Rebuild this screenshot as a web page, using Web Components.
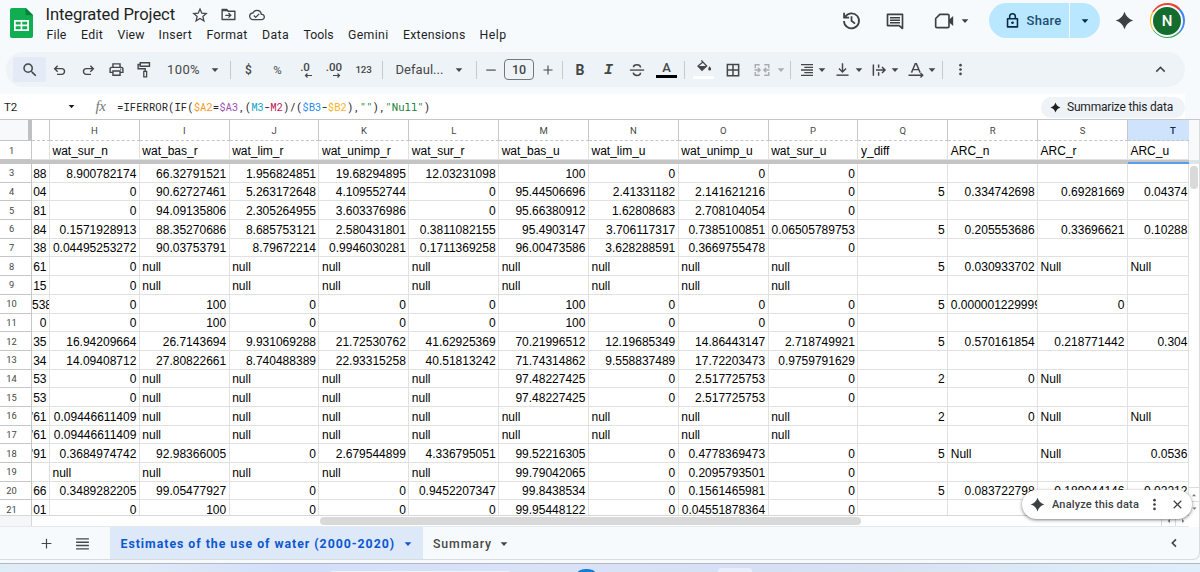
<!DOCTYPE html>
<html lang="en">
<head>
<meta charset="utf-8">
<title>Integrated Project</title>
<style>
	html, body { margin: 0; height: 100%; overflow: hidden; }
	body { font-family: Roboto, "Liberation Sans", sans-serif; background: #f6fafd; color: #1f1f1f; }
</style>
</head>
<body>
<sheet-app></sheet-app>

<script>
const ICONS = {
	star: '<path d="M12 3l2.7 6.2 6.7.6-5.1 4.4 1.6 6.6-5.900-3.500-5.900 3.500 1.600-6.600-5.100-4.400 6.700-.6z" fill="none" stroke="currentColor" stroke-width="1.900"/>',
	move: '<path d="M3 5h6.500l2 2.500H21V19H3z" fill="none" stroke="currentColor" stroke-width="2" stroke-linejoin="round"/><path d="M3 4.500h6.500l2.500 3H3z"/><path d="M7.500 13.200h7.500M12 10l3.200 3.200L12 16.400" fill="none" stroke="currentColor" stroke-width="1.900"/>',
	cloud: '<path d="M19.35 10.04A7.49 7.49 0 0 0 12 4C9.11 4 6.6 5.64 5.35 8.04A5.994 5.994 0 0 0 0 14c0 3.31 2.69 6 6 6h13c2.76 0 5-2.24 5-5 0-2.64-2.05-4.78-4.65-4.96zM19 18H6c-2.21 0-4-1.79-4-4 0-2.05 1.53-3.76 3.56-3.97l1.07-.11.5-.95A5.469 5.469 0 0 1 12 6c2.62 0 4.88 1.86 5.39 4.43l.3 1.5 1.53.11A2.98 2.98 0 0 1 22 15c0 1.65-1.35 3-3 3zm-9-3.82-2.09-2.09L6.5 13.5 10 17l6.01-6.01-1.41-1.41z"/>',
	history: '<path d="M4.600 8A8.600 8.600 0 1 1 3.400 12.500M3.500 3v5.800h5.800M12 7v5.300l4 3.200" fill="none" stroke="currentColor" stroke-width="2"/>',
	comment: '<path d="M3 4h18v17l-4-3.5H3z" fill="none" stroke="currentColor" stroke-width="2" stroke-linejoin="round"/><path d="M6 8h12M6 11h12M6 14h12" stroke="currentColor" stroke-width="1.7"/>',
	video: '<path d="M7 4h9.5q1.5 0 1.5 1.5v13q0 1.5-1.5 1.5H3.500q-1.500 0-1.500-1.500V9z" fill="none" stroke="currentColor" stroke-width="2"/><path d="M18 10.500l5-4.500v12l-5-4.500z"/>',
	lock: '<path d="M5 9.500h14V21H5z" fill="none" stroke="currentColor" stroke-width="2.200" stroke-linejoin="round"/><path d="M8 9V6.500a4 4 0 0 1 8 0V9" fill="none" stroke="currentColor" stroke-width="2.200"/><circle cx="12" cy="15.200" r="1.900"/>',
	spark: '<path d="M12 1q2.600 8.400 11 11-8.400 2.600-11 11-2.600-8.400-11-11 8.400-2.600 11-11z"/>',
	search: '<path d="M15.500 14h-.79l-.28-.27A6.471 6.471 0 0 0 16 9.500 6.500 6.500 0 1 0 9.500 16c1.610 0 3.090-.59 4.230-1.570l.27.28v.79l5 4.990L20.490 19l-4.990-5zm-6 0C7.010 14 5 11.990 5 9.500S7.010 5 9.500 5 14 7.010 14 9.500 11.990 14 9.500 14z"/>',
	undo: '<path d="M4 10h10.500a4.300 4.300 0 0 1 0 8.600H7.500M8.500 5.500L4 10l4.500 4.500" fill="none" stroke="currentColor" stroke-width="2.100"/>',
	redo: '<path d="M20 10H9.500a4.300 4.300 0 0 0 0 8.600h7M15.500 5.500L20 10l-4.500 4.500" fill="none" stroke="currentColor" stroke-width="2.100"/>',
	print: '<path d="M19 8h-1V3H6v5H5c-1.660 0-3 1.340-3 3v6h4v4h12v-4h4v-6c0-1.660-1.340-3-3-3zM8 5h8v3H8V5zm8 12v2H8v-4h8v2zm2-2v-2H6v2H4v-4c0-.55.45-1 1-1h14c.55 0 1 .45 1 1v4h-2z"/><circle cx="18" cy="11.500" r="1"/>',
	paint: '<path d="M6 2.500h13v5H6zM6 5H3v6h10v4" fill="none" stroke="currentColor" stroke-width="2"/><path d="M11 14.500h4v8h-4z" fill="none" stroke="currentColor" stroke-width="1.800"/>',
	minus: '<path d="M2.500 11h19v2.300h-19z"/>',
	plus: '<path d="M10.900 3h2.200v7.900H21v2.200h-7.900V21h-2.200v-7.900H3v-2.200h7.900z"/>',
	strike: '<path d="M2.500 11.200h19v1.800h-19z"/><path d="M16.800 8.700C16.500 6.200 14.700 5 12 5S7.300 6.400 7.300 8.400M7 15.500c.3 2.500 2.200 3.700 5 3.700s4.700-1.400 4.700-3.500" fill="none" stroke="currentColor" stroke-width="2"/>',
	fill: '<path d="M8 2l8 8.500-7 6.500-6-6.500L10 5" fill="none" stroke="currentColor" stroke-width="2"/><path d="M3.500 10.500h12l-6.500 6z"/><path d="M20.500 11s-2.200 2.600-2.200 4.200a2.200 2.200 0 0 0 4.400 0c0-1.600-2.200-4.200-2.200-4.200z"/>',
	borders: '<path d="M4.500 4.500h15v15h-15zM12 4.500v15M4.500 12h15" fill="none" stroke="currentColor" stroke-width="2"/>',
	merge: '<path d="M9 5H3v4.500M9 19H3v-4.500M15 5h6v4.500M15 19h6v-4.500M2 12h7M22 12h-7M6.500 9l3 3-3 3M17.500 9l-3 3 3 3" fill="none" stroke="currentColor" stroke-width="1.900"/>',
	right: '<path d="M3 3h18v2H3zM8 7h13v2H8zM3 11h18v2H3zM8 15h13v2H8zM3 19h18v2H3z"/>',
	bottom: '<path d="M12 3v12M7 10.500l5 5 5-5" fill="none" stroke="currentColor" stroke-width="2"/><path d="M3.500 19h17v2h-17z"/>',
	wrap: '<path d="M4.500 4.500v15M11.500 4.500v4.500M11.500 15v4.500M8 12h12M16 8l4 4-4 4" fill="none" stroke="currentColor" stroke-width="2"/>',
	rotate: '<path d="M6 15.500L11 3.500h1.500l5 12M8 11.500h7.500" fill="none" stroke="currentColor" stroke-width="1.900"/><path d="M2 19h18M18 16l3 3-3 3" fill="none" stroke="currentColor" stroke-width="1.900"/>',
	more: '<circle cx="12" cy="5" r="2.100"/><circle cx="12" cy="12" r="2.100"/><circle cx="12" cy="19" r="2.100"/>',
	up: '<path d="M6 15L12 9l6 6" fill="none" stroke="currentColor" stroke-width="2"/>',
	left: '<path d="M15 6.500L9.500 12l5.500 5.500" fill="none" stroke="currentColor" stroke-width="2.500"/>',
	menu: '<path d="M3 4.500h18v2H3zM3 9.200h18v2H3zM3 13.900h18v2H3zM3 18.600h18v2H3z"/>',
	close: '<path d="M5 5l14 14M19 5L5 19" fill="none" stroke="currentColor" stroke-width="2.200"/>',
	caret: '<path d="M2 7h20L12 18z"/>',
	triup: '<path d="M4 17h16L12 8z"/>',
	triright: '<path d="M8 4v16l9-8z"/>',
	trileft: '<path d="M16 4v16l-9-8z"/>'
}

class SheetIcon extends HTMLElement {
	connectedCallback() {
		const size = this.getAttribute('size') || 18
		this.attachShadow({ mode: 'open' }).innerHTML = `
			<style>
				:host { display: inline-flex; flex: none; }
				svg { display: block; fill: currentColor; }
			</style>
			<svg width="${size}" height="${size}" viewBox="0 0 24 24">${ICONS[this.getAttribute('name')]}</svg>
		`
	}
}
customElements.define('sheet-icon', SheetIcon)

// a label that tracks its letters out (or in) to fill the given width
class SheetLabel extends HTMLElement {
	connectedCallback() {
		this.attachShadow({ mode: 'open' }).innerHTML = `
			<style>
				:host { display: block; flex: none; white-space: nowrap; }
				span { display: inline-block; }
			</style>
			<span>${this.getAttribute('text')}</span>
		`
		const width = Number(this.getAttribute('width'))
		const span = this.shadowRoot.querySelector('span')
		this.style.width = width + 'px'
		const gap = (width - span.getBoundingClientRect().width) / span.textContent.length
		span.style.letterSpacing = gap.toFixed(3) + 'px'
	}
}
customElements.define('sheet-label', SheetLabel)

class SheetHeader extends HTMLElement {
	connectedCallback() {
		// [text, gap before, width]
		const menu = [['File', 0, 20], ['Edit', 14.500, 22], ['View', 14.500, 27], ['Insert', 14, 33.500], ['Format', 14.500, 41],
			['Data', 14.500, 27], ['Tools', 14.500, 30], ['Gemini', 14.500, 40.500], ['Extensions', 14.500, 62.500], ['Help', 14, 27]]
		this.attachShadow({ mode: 'open' }).innerHTML = `
			<style>
				:host { display: flex; height: 52px; box-sizing: border-box; padding-left: 10px; }
				.logo { margin-top: 8px; flex: none; }
				.doc { margin-left: 12.500px; padding-top: 3px; flex: 1; }
				.title { display: flex; align-items: center; height: 23px; font-size: 16.600px; color: #444746; }
				.title sheet-label { color: #1f1f1f; margin-top: -1px; }
				.menu { display: flex; font-size: 12.300px; line-height: 16px; padding: .500px 0 0 1px; }
				.actions { display: flex; align-items: center; height: 41px; color: #3c4043; }
				.share { display: flex; height: 35.500px; border-radius: 18px; overflow: hidden; color: #0a2a43; }
				.share div { display: flex; align-items: center; background: #b9e7ff; }
				.share .main { width: 80px; margin-right: 1px; }
				.share .drop { width: 30px; justify-content: center; }
				.share sheet-label { font-size: 13px; font-weight: 500; color: #1b4f72; margin-left: 6px; }
				.ring { width: 35px; height: 35px; border-radius: 50%; display: grid; place-items: center; margin: 0 15.500px 0 15.500px;
					background: conic-gradient(from 0deg, #ea4335 45deg, #4285f4 45deg 135deg, #34a853 135deg 235deg, #fbbc04 235deg 300deg, #ea4335 300deg); }
				.avatar { width: 28px; height: 28px; border: 2px solid #f6fafd; border-radius: 50%; background: #146c2e; color: #fff;
					font-size: 15px; font-weight: 500; display: grid; place-items: center; }
			</style>
			<svg class="logo" width="23" height="30" viewBox="0 0 23 30">
				<path d="M2 0h14l7 7v21q0 2-2 2H2q-2 0-2-2V2q0-2 2-2z" fill="#0fae50"/>
				<path d="M15.500 0L23 7.300h-7.500z" fill="#078239"/>
				<path d="M4 12h15v11H4z" fill="#fff"/>
				<path d="M5.700 13.700h4.900v2.700H5.700zM12.300 13.700h4.900v2.700h-4.900zM5.700 18.300h4.900v2.900H5.700zM12.300 18.300h4.900v2.900h-4.900z" fill="#0fae50"/>
			</svg>
			<div class="doc">
				<div class="title">
					<sheet-label text="Integrated Project" width="129.500"></sheet-label>
					<sheet-icon name="star" size="16" style="margin-left:17px"></sheet-icon>
					<sheet-icon name="move" size="17" style="margin-left:12px"></sheet-icon>
					<sheet-icon name="cloud" size="16" style="margin-left:11.500px"></sheet-icon>
				</div>
				<div class="menu">
					${menu.map(([text, gap, width]) => `<sheet-label text="${text}" width="${width}" style="margin-left:${gap}px"></sheet-label>`).join('')}
				</div>
			</div>
			<div class="actions">
				<sheet-icon name="history" size="21" style="margin-right:23px"></sheet-icon>
				<sheet-icon name="comment" size="20" style="margin-right:29px"></sheet-icon>
				<sheet-icon name="video" size="20" style="margin-right:7px"></sheet-icon>
				<sheet-icon name="caret" size="8" style="margin-right:20px"></sheet-icon>
				<div class="share">
					<div class="main"><sheet-icon name="lock" size="17" style="margin-left:14.500px"></sheet-icon><sheet-label text="Share" width="35"></sheet-label></div>
					<div class="drop"><sheet-icon name="caret" size="8"></sheet-icon></div>
				</div>
				<sheet-icon name="spark" size="19" style="margin-left:15px"></sheet-icon>
				<div class="ring"><div class="avatar">N</div></div>
			</div>
		`
	}
}
customElements.define('sheet-header', SheetHeader)

class SheetToolbar extends HTMLElement {
	connectedCallback() {
		const icon = (name, gap, width = 18, style = '') =>
			`<div class="item" style="margin-left:${gap}px;width:${width}px;${style}"><sheet-icon name="${name}" size="${width}"></sheet-icon></div>`
		const caret = (gap, style = '') => icon('caret', gap, 8, style)
		const line = gap => `<div class="line" style="margin-left:${gap}px"></div>`
		const text = (label, gap, width, style = '') =>
			`<sheet-label text="${label}" width="${width}" style="margin-left:${gap}px;${style}"></sheet-label>`
		this.attachShadow({ mode: 'open' }).innerHTML = `
			<style>
				:host { display: flex; align-items: center; height: 35px; margin: 0 15px 0 6px; border-radius: 18px; background: #eef3f8; color: #444746; font-size: 13px; }
				.item { flex: none; display: flex; justify-content: center; align-items: center; }
				.search { margin-left: 7px; width: 33px; height: 25px; background: #e4ebf6; border-radius: 2px; }
				.line { flex: none; width: 1px; height: 18px; background: #c7cacd; }
				.size { width: 30px; height: 21px; box-sizing: border-box; border: 1px solid #747775; border-radius: 4px; font-size: 12.500px; font-weight: 500; }
				.letter { width: 18px; font-weight: 700; font-size: 14px; }
				.italic { font-family: "Liberation Mono", monospace; font-style: italic; font-size: 15px; padding-top: 2px; }
				.decimal { flex-direction: column; width: 18px; font-size: 11.500px; font-weight: 500; line-height: 11px; }
				.decimal svg { display: block; margin-left: 5px; }
				.color { flex-direction: column; width: 21px; height: 17px; justify-content: space-between; }
				.color span { font-size: 13px; line-height: 13px; font-weight: 500; }
				.bar { width: 21px; height: 3px; background: #000; flex: none; }
				.fill { height: 20px; margin-top: -2px; }
				.fill .bar { background: #fff; }
				.collapse { margin: 0 16.500px 0 auto; }
			</style>
			<div class="item search"><sheet-icon name="search" size="18"></sheet-icon></div>
			${icon('undo', 5.500, 16)}${icon('redo', 12, 16)}${icon('print', 12, 17)}${icon('paint', 11.500, 17)}
			${text('100%', 14, 33)}${caret(11)}${line(11)}
			<div class="item" style="margin-left:8.500px;width:18px;font-size:12px;font-weight:500">$</div>
			<div class="item" style="margin-left:11px;width:18px;font-size:11.500px">%</div>
			<div class="item decimal" style="margin-left:9.500px">.0<svg width="8" height="5" viewBox="0 0 8 5"><path d="M8 2.500H1.500M3.500.500l-2 2 2 2" fill="none" stroke="currentColor" stroke-width="1.200"/></svg></div>
			<div class="item decimal" style="margin-left:11px">.00<svg width="8" height="5" viewBox="0 0 8 5"><path d="M0 2.500h6.500M4.500.500l2 2-2 2" fill="none" stroke="currentColor" stroke-width="1.200"/></svg></div>
			${text('123', 12.500, 16, 'font-size:9.800px;font-weight:500')}${line(10)}
			${text('Defaul...', 13, 48)}${caret(11)}${line(13)}
			${icon('minus', 8, 12)}
			<div class="item size" style="margin-left:7.500px">10</div>
			${icon('plus', 7.500, 12)}${line(8.500)}
			<div class="item letter" style="margin-left:8px">B</div>
			<div class="item letter italic" style="margin-left:10.500px">I</div>
			${icon('strike', 10.500)}
			<div class="item color" style="margin-left:10px"><span>A</span><div class="bar"></div></div>
			${line(7)}
			<div class="item color fill" style="margin-left:8px"><sheet-icon name="fill" size="16"></sheet-icon><div class="bar"></div></div>
			${icon('borders', 10)}${icon('merge', 11, 18, 'opacity:.4')}${caret(6, 'opacity:.4')}${line(5)}
			${icon('right', 7.500, 16)}${caret(3.500)}${icon('bottom', 8, 17)}${caret(3.500)}${icon('wrap', 7.500)}${caret(3)}
			${icon('rotate', 7.500)}${caret(3)}${line(6.500)}${icon('more', 10, 15)}
			<sheet-icon class="collapse" name="up" size="17"></sheet-icon>
		`
	}
}
customElements.define('sheet-toolbar', SheetToolbar)

class SheetFormula extends HTMLElement {
	connectedCallback() {
		this.attachShadow({ mode: 'open' }).innerHTML = `
			<style>
				:host { display: flex; align-items: center; height: 26px; box-sizing: border-box; margin-top: 7px; background: linear-gradient(90deg, #fff 1185px, #f6fafd 1185px); border-bottom: 1px solid #c7c7c7; font-size: 12px; }
				.name { margin-left: 4px; width: 63.500px; font-size: 11.500px; }
				.fx { margin-left: 21px; width: 21.500px; font: italic 15px "Liberation Serif", serif; color: #777; letter-spacing: -.500px; }
				code { flex: 1; font: 10.650px "Roboto Mono", "Liberation Mono", monospace; color: #202124; white-space: nowrap; }
				.chip { display: flex; align-items: center; box-sizing: border-box; width: 144px; height: 21px; padding-left: 9px; margin: 1px 15px 0 0; border-radius: 11px; background: #eef3f8; }
				.chip sheet-label { margin-left: 6px; }
			</style>
			<div class="name">T2</div>
			<sheet-icon name="caret" size="7"></sheet-icon>
			<div class="fx">fx</div>
			<code>=IFERROR(IF(<span style="color:#f7981d">$A2</span>=<span style="color:#9a4fb5">$A3</span>,(<span style="color:#11a9cc">M3</span>-<span style="color:#c2185b">M2</span>)/(<span style="color:#2a8ef0">$B3</span>-<span style="color:#fbb322">$B2</span>),<span style="color:#188038">""</span>),<span style="color:#188038">"Null"</span>)</code>
			<div class="chip"><sheet-icon name="spark" size="11"></sheet-icon><sheet-label text="Summarize this data" width="106"></sheet-label></div>
		`
	}
}
customElements.define('sheet-formula', SheetFormula)

const COLUMNS = ['', 'H', 'I', 'J', 'K', 'L', 'M', 'N', 'O', 'P', 'Q', 'R', 'S', 'T']
const NAMES = ['', 'wat_sur_n', 'wat_bas_r', 'wat_lim_r', 'wat_unimp_r', 'wat_sur_r', 'wat_bas_u', 'wat_lim_u', 'wat_unimp_u', 'wat_sur_u', 'y_diff', 'ARC_n', 'ARC_r', 'ARC_u']
// row number, then the cells of G to T; G is scrolled half out of view
const ROWS = `
3|88|8.900782174|66.32791521|1.956824851|19.68294895|12.03231098|100|0|0|0||||
4|04|0|90.62727461|5.263172648|4.109552744|0|95.44506696|2.41331182|2.141621216|0|5|0.334742698|0.69281669|0.04374
5|81|0|94.09135806|2.305264955|3.603376986|0|95.66380912|1.62808683|2.708104054|0||||
6|84|0.1571928913|88.35270686|8.685753121|2.580431801|0.3811082155|95.4903147|3.706117317|0.7385100851|0.06505789753|5|0.205553686|0.33696621|0.10288
7|38|0.04495253272|90.03753791|8.79672214|0.9946030281|0.1711369258|96.00473586|3.628288591|0.3669755478|0||||
8|61|0|null|null|null|null|null|null|null|null|5|0.030933702|Null|Null
9|15|0|null|null|null|null|null|null|null|null||||
10|538|0|100|0|0|0|100|0|0|0|5|0.000001229999|0|
11|0|0|100|0|0|0|100|0|0|0||||
12|35|16.94209664|26.7143694|9.931069288|21.72530762|41.62925369|70.21996512|12.19685349|14.86443147|2.718749921|5|0.570161854|0.218771442|0.304
13|34|14.09408712|27.80822661|8.740488389|22.93315258|40.51813242|71.74314862|9.558837489|17.72203473|0.9759791629||||
14|53|0|null|null|null|null|97.48227425|0|2.517725753|0|2|0|Null|
15|53|0|null|null|null|null|97.48227425|0|2.517725753|0||||
16|'61|0.09446611409|null|null|null|null|null|null|null|null|2|0|Null|Null
17|'61|0.09446611409|null|null|null|null|null|null|null|null||||
18|'91|0.3684974742|92.98366005|0|2.679544899|4.336795051|99.52216305|0|0.4778369473|0|5|Null|Null|0.0536
19||null|null|null|null|null|99.79042065|0|0.2095793501|0||||
20|66|0.3489282205|99.05477927|0|0|0.9452207347|99.8438534|0|0.1561465981|0|5|0.083722798|0.189044146|0.02212
21|01|0|100|0|0|0|99.95448122|0|0.04551878364|0||||
`.trim().split('\n').map(row => row.split('|'))

class SheetRow extends HTMLElement {
	set data([number, ...cells]) {
		const kind = (cell, i) => {
			let name = 'cell'
			if (/^['\d]/.test(cell)) name += ' num'
			if (i === 0) name += ' first'
			if (i === 13) name += ' last'
			if (cell.length > 13 || (i === 0 && cell === '538')) name += ' cut'
			return name
		}
		this.attachShadow({ mode: 'open' }).innerHTML = `
			<style>
				:host { display: flex; height: 18.700px; flex: none; overflow: hidden; background: #fff; }
				div { box-sizing: border-box; flex: none; overflow: hidden; white-space: nowrap; display: flex; align-items: flex-end; border: solid #e1e1e1; border-width: 0 1px 1px 0; }
				.number { width: 32px; padding-right: 8px; font-size: 9.300px; justify-content: center; align-items: center; color: #444746; border-color: #c4c7c5; }
				.cell { width: 89.830px; padding: 0 2.500px .500px; font: 12px/13.500px "Liberation Sans", Arial, sans-serif; color: #000; }
				.cell.num { justify-content: flex-end; }
				.cell.first { width: 18px; padding-left: 0; }
				.cell.last { width: 61px; padding-right: .500px; }
				.cell.cut { justify-content: flex-start; }
			</style>
			<div class="number">${number}</div>
			${cells.map((cell, i) => `<div class="${kind(cell, i)}">${cell}</div>`).join('')}
		`
	}
}
customElements.define('sheet-row', SheetRow)

class SheetGrid extends HTMLElement {
	connectedCallback() {
		this.attachShadow({ mode: 'open' }).innerHTML = `
			<style>
				:host { display: flex; height: 407px; background: #fff; }
				.main { width: 1189px; flex: none; display: flex; flex-direction: column; }
				.letters { display: flex; height: 21px; flex: none; background: #fff; font-size: 9.500px; color: #444746; }
				.letters div { box-sizing: border-box; width: 89.830px; flex: none; display: grid; place-items: center; border-right: 1px solid #c4c7c5; border-bottom: 1px dashed #c4c7c5; }
				.letters .corner { width: 32px; background: #f8f9fa; border-right: 4px solid #c0c0c0; border-bottom: 1px solid #c4c7c5; }
				.letters .first { width: 18px; }
				.letters .last { width: 61px; background: #cfe3fc; padding-left: 29px; color: #0b2a52; font-weight: 500; border-right: 0; }
				.names { height: 19px; flex: none; }
				.freeze { height: 4px; flex: none; background: #c4c4c4; display: flex; justify-content: flex-end; align-items: flex-end; }
				.freeze div { width: 61px; height: 2px; background: #5a9df0; }
				.rows { height: 352px; flex: none; overflow: hidden; border-bottom: 1px solid #d5d7d9; box-sizing: border-box; }
				.hscroll { flex: 1; display: flex; align-items: center; color: #777; box-sizing: border-box; border-bottom: 1px solid #e6e8ea; }
				.hscroll .pad { width: 31px; height: 100%; background: #f5f6f7; border-right: 1px solid #d5d7d9; }
				.hscroll .thumb { margin-left: 288px; width: 541px; height: 8px; border-radius: 4px; background: #d9d9d9; }
				.hscroll .btn { width: 13px; height: 100%; display: grid; place-items: center; border-left: 1px solid #dcdcdc; }
				.vscroll { width: 10px; border-right: 1px solid #dcdcdc; display: flex; flex-direction: column; align-items: center; color: #777; }
				.vscroll .top { width: 100%; height: 40px; background: #f8f9fa; border-bottom: 4px solid #dde5ec; }
				.vscroll .thumb { margin-top: 2px; width: 8px; height: 23px; border-radius: 4px; background: #d9d9d9; }
				.vscroll .btns { margin-top: 298px; width: 100%; }
				.vscroll .btn { height: 14px; box-sizing: border-box; display: grid; place-items: center; border-top: 1px solid #dcdcdc; }
			</style>
			<div class="main">
				<div class="letters"><div class="corner"></div>${COLUMNS.map((letter, i) => `<div class="${i === 0 ? 'first' : i === 13 ? 'last' : ''}">${letter}</div>`).join('')}</div>
				<div class="names"></div>
				<div class="freeze"><div></div></div>
				<div class="rows"></div>
				<div class="hscroll">
					<div class="pad"></div><div class="thumb"></div>
					<div class="btn" style="margin-left:auto"><sheet-icon name="trileft" size="6"></sheet-icon></div>
					<div class="btn"><sheet-icon name="triright" size="6"></sheet-icon></div>
				</div>
			</div>
			<div class="vscroll">
				<div class="top"></div><div class="thumb"></div>
				<div class="btns"><div class="btn"><sheet-icon name="triup" size="6"></sheet-icon></div><div class="btn"><sheet-icon name="caret" size="5"></sheet-icon></div></div>
			</div>
		`
		const names = document.createElement('sheet-row')
		names.data = ['1', ...NAMES]
		names.style.height = '19px'
		this.shadowRoot.querySelector('.names').append(names)
		const rows = this.shadowRoot.querySelector('.rows')
		for (const data of ROWS) {
			const row = document.createElement('sheet-row')
			row.data = data
			rows.append(row)
		}
	}
}
customElements.define('sheet-grid', SheetGrid)

class SheetTabs extends HTMLElement {
	connectedCallback() {
		this.attachShadow({ mode: 'open' }).innerHTML = `
			<style>
				:host { display: flex; align-items: center; height: 32px; background: #f6fafd; border-bottom: 1px solid #d9dcdf; border-right: 1px solid #d9dcdf; border-radius: 0 0 7px 0; color: #444746; font-size: 12.300px; font-weight: 500; }
				.tab { display: flex; align-items: center; height: 100%; padding-top: 2px; box-sizing: border-box; }
				.active { margin-left: 19.500px; width: 312.500px; padding-left: 10.500px; background: #dde8f8; color: #0b57d0; font-weight: 700; }
				.end { margin-left: auto; margin-right: 17px; }
			</style>
			<sheet-icon name="plus" size="13" style="margin-left:39.500px"></sheet-icon>
			<sheet-icon name="menu" size="17" style="margin-left:21px"></sheet-icon>
			<div class="tab active"><sheet-label text="Estimates of the use of water (2000-2020)" width="274.500"></sheet-label><sheet-icon name="caret" size="8" style="margin-left:8.500px"></sheet-icon></div>
			<div class="tab" style="margin-left:10.500px"><sheet-label text="Summary" width="59"></sheet-label><sheet-icon name="caret" size="8" style="margin-left:8px"></sheet-icon></div>
			<sheet-icon class="end" name="left" size="16"></sheet-icon>
		`
	}
}
customElements.define('sheet-tabs', SheetTabs)

class AnalyzeChip extends HTMLElement {
	connectedCallback() {
		this.attachShadow({ mode: 'open' }).innerHTML = `
			<style>
				:host { display: flex; align-items: center; width: 170px; height: 29px; box-sizing: border-box; padding-left: 7.500px; border-radius: 15px; background: #fff;
					box-shadow: 0 1px 3px rgba(0, 0, 0, .4), 0 1px 5px rgba(0, 0, 0, .15); color: #3c4043; font-size: 11px; font-weight: 500; }
			</style>
			<sheet-icon name="spark" size="15"></sheet-icon>
			<sheet-label text="Analyze this data" width="87" style="margin-left:7.500px"></sheet-label>
			<sheet-icon name="more" size="15" style="margin-left:8px"></sheet-icon>
			<sheet-icon name="close" size="13" style="margin-left:9px"></sheet-icon>
		`
	}
}
customElements.define('analyze-chip', AnalyzeChip)

// strip of the desktop taskbar under the browser window
class DesktopStrip extends HTMLElement {
	connectedCallback() {
		this.attachShadow({ mode: 'open' }).innerHTML = `
			<style>
				:host { display: flex; align-items: flex-end; height: 9px; box-sizing: border-box; margin-top: 3px; border-top: 1px solid #b4b7bb; overflow: hidden;
					background: linear-gradient(90deg, #dfedf7, #dfe9f7 12%, #d2dffa 24%, #d9e2f8 45%, #d6dff6 65%, #d9e2f3 75%, #dcecf8 90%, #dfeefa); }
				.search { margin-left: 331px; width: 178px; height: 1px; border-radius: 4px 4px 0 0; background: #eef2fc; }
				.app { margin-left: 69px; width: 17px; height: 3px; border-radius: 50% 50% 0 0 / 100% 100% 0 0; background: #0f7fd6; }
				.tile { margin-left: 123px; width: 34px; height: 4px; border-radius: 3px 3px 0 0; background: #eaeefa; }
			</style>
			<div class="search"></div><div class="app"></div><div class="tile"></div>
		`
	}
}
customElements.define('desktop-strip', DesktopStrip)

class SheetApp extends HTMLElement {
	connectedCallback() {
		this.attachShadow({ mode: 'open' }).innerHTML = `
			<style>
				:host { display: block; width: 1200px; height: 572px; overflow: hidden; position: relative; }
				analyze-chip { position: absolute; left: 1022px; top: 490px; }
			</style>
			<sheet-header></sheet-header>
			<sheet-toolbar></sheet-toolbar>
			<sheet-formula></sheet-formula>
			<sheet-grid></sheet-grid>
			<sheet-tabs></sheet-tabs>
			<desktop-strip></desktop-strip>
			<analyze-chip></analyze-chip>
		`
	}
}
customElements.define('sheet-app', SheetApp)
</script>
</body>
</html>
